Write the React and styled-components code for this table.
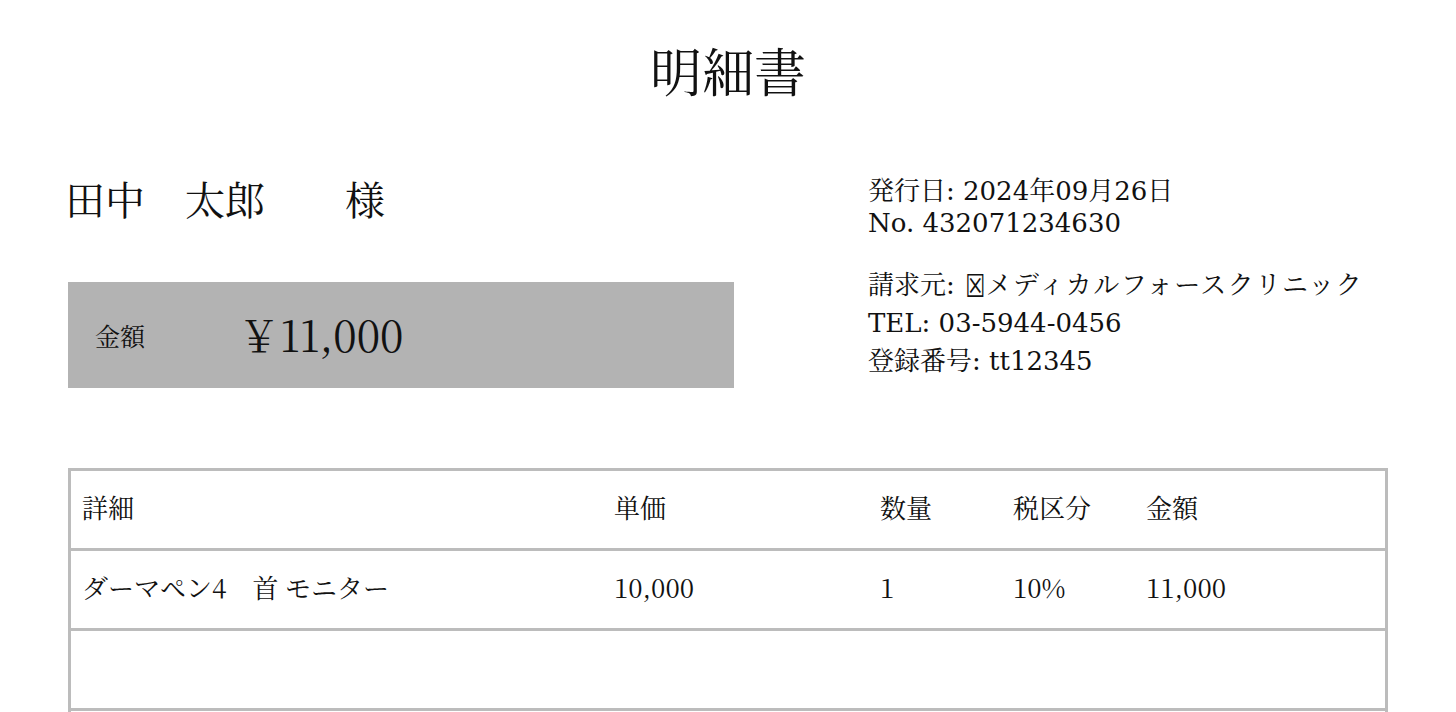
import React from 'react';
import styled, { createGlobalStyle } from 'styled-components';

const GlobalStyle = createGlobalStyle`
  body {
    margin: 0;
    background: #ffffff;
    color: #111111;
    font-family: "Noto Serif CJK JP", "Liberation Serif", "Noto Sans CJK JP", serif;
  }
`;

const Page = styled.div`
  padding: 0 68px;
`;

const Title = styled.h1`
  margin: 0;
  padding-top: 38px;
  text-align: center;
  font-size: 52px;
  line-height: 64px;
  font-weight: normal;
`;

const TopSection = styled.div`
  display: grid;
  grid-template-columns: 666px 1fr;
  column-gap: 134px;
`;

const LeftColumn = styled.div`
  display: flex;
  flex-direction: column;
`;

const CustomerName = styled.div`
  margin-top: 72px;
  margin-left: -3px;
  font-size: 40px;
  line-height: 48px;
  white-space: pre;
`;

const AmountBox = styled.div`
  margin-top: 60px;
  height: 106px;
  display: flex;
  align-items: center;
  padding-left: 27px;
  background: #b3b3b3;
`;

const AmountLabel = styled.div`
  width: 143px;
  font-size: 25px;
`;

const AmountValue = styled.div`
  font-size: 42px;
  margin-top: -2px;
`;

const InfoColumn = styled.div`
  padding-top: 73px;
  font-family: "DejaVu Serif", "Noto Serif CJK JP", serif;
  font-size: 26px;
`;

const InfoBlock = styled.div`
  margin-bottom: ${(p) => p.$mb || 0}px;
`;

const InfoLine = styled.div`
  height: ${(p) => p.$lh}px;
  line-height: ${(p) => p.$lh}px;
  white-space: nowrap;
`;

const Wide = styled.span`
  letter-spacing: 1.4px;
`;

const Box = styled.span`
  display: inline-block;
  font-family: "DejaVu Sans", sans-serif;
  font-size: 32px;
  line-height: 1;
  transform: scaleX(0.7);
  margin: 0 -4px 0 -2px;
  vertical-align: -3px;
`;

const Table = styled.table`
  margin-top: 80px;
  width: 100%;
  border-collapse: collapse;
  table-layout: fixed;
  border: 3px solid #bcbcbc;
  font-size: 26px;
`;

const Cell = styled.td`
  height: 71px;
  padding: 0 0 6px 11px;
  border-top: 3px solid #bcbcbc;
  width: ${(p) => p.$w};
  text-align: left;
  vertical-align: middle;
  font-weight: normal;
  white-space: nowrap;
`;

const columns = ['521px', '255px', '122px', '122px', 'auto'];

const rows = [
  ['ダーマペン4　首 モニター', '10,000', '1', '10%', '11,000'],
  ['', '', '', '', ''],
  ['', '', '', '', ''],
];

function App() {
  return (
    <Page>
      <GlobalStyle />
      <Title>明細書</Title>
      <TopSection>
        <LeftColumn>
          <CustomerName>田中　太郎　　様</CustomerName>
          <AmountBox>
            <AmountLabel>金額</AmountLabel>
            <AmountValue>￥11,000</AmountValue>
          </AmountBox>
        </LeftColumn>
        <InfoColumn>
          <InfoBlock $mb={27}>
            <InfoLine $lh={32}>発行日: 2024年09月26日</InfoLine>
            <InfoLine $lh={32}>No. 432071234630</InfoLine>
          </InfoBlock>
          <InfoBlock>
            <InfoLine $lh={38}>請求元: <Box>☒</Box><Wide>メディカルフォースクリニック</Wide></InfoLine>
            <InfoLine $lh={38}>TEL: 03-5944-0456</InfoLine>
            <InfoLine $lh={38}>登録番号: tt12345</InfoLine>
          </InfoBlock>
        </InfoColumn>
      </TopSection>
      <Table>
        <thead>
          <tr>
            {['詳細', '単価', '数量', '税区分', '金額'].map((h, i) => (
              <Cell as="th" key={h} $w={columns[i]}>{h}</Cell>
            ))}
          </tr>
        </thead>
        <tbody>
          {rows.map((r, ri) => (
            <tr key={ri}>
              {r.map((c, ci) => (
                <Cell key={ci} $w={columns[ci]}>{c}</Cell>
              ))}
            </tr>
          ))}
        </tbody>
      </Table>
    </Page>
  );
}

export default App;
